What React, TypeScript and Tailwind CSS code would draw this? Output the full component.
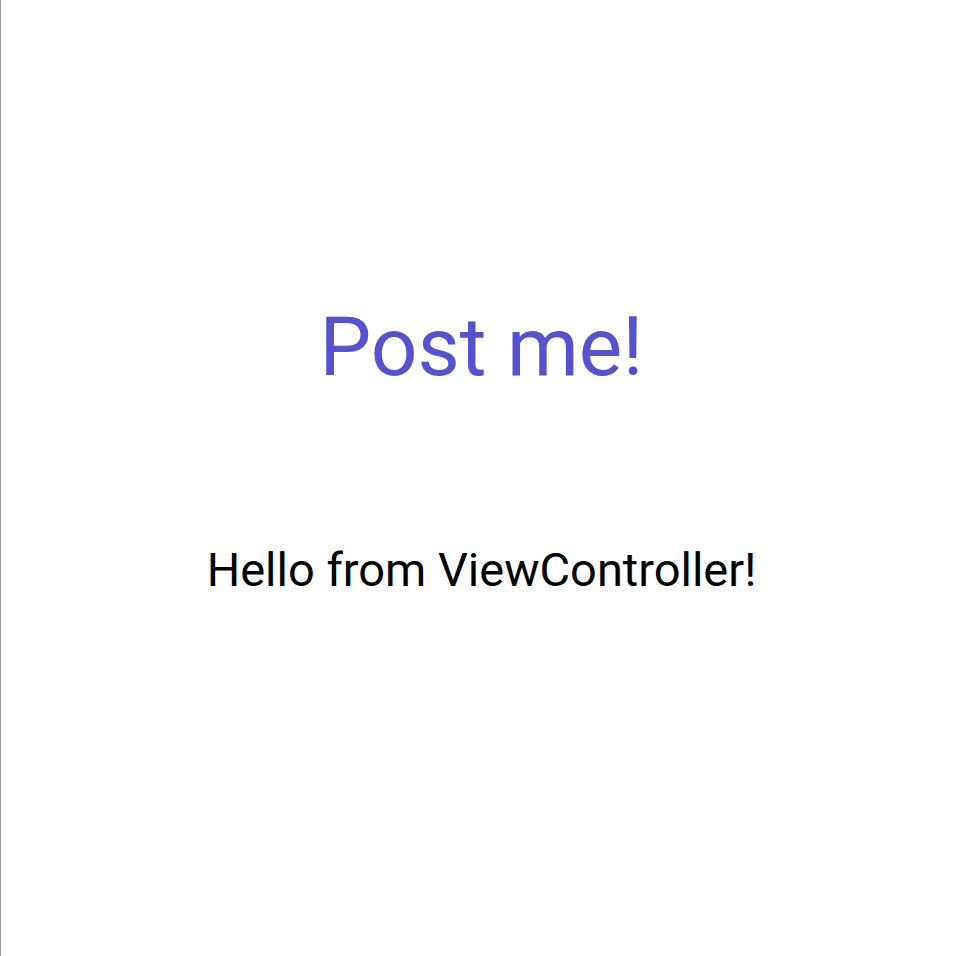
export default function App() {
  return (
    <div className="w-[962px] h-[956px] bg-white border-l border-[#9a9a9a] flex flex-col items-center" style={{ fontFamily: "Roboto, 'Noto Sans', sans-serif" }}>
      <div className="mt-[297px] text-[82px] leading-[100px] text-[#5352cf]">Post me!</div>
      <div className="mt-[143px] text-[47px] leading-[60px] text-black">Hello from ViewController!</div>
    </div>
  );
}
